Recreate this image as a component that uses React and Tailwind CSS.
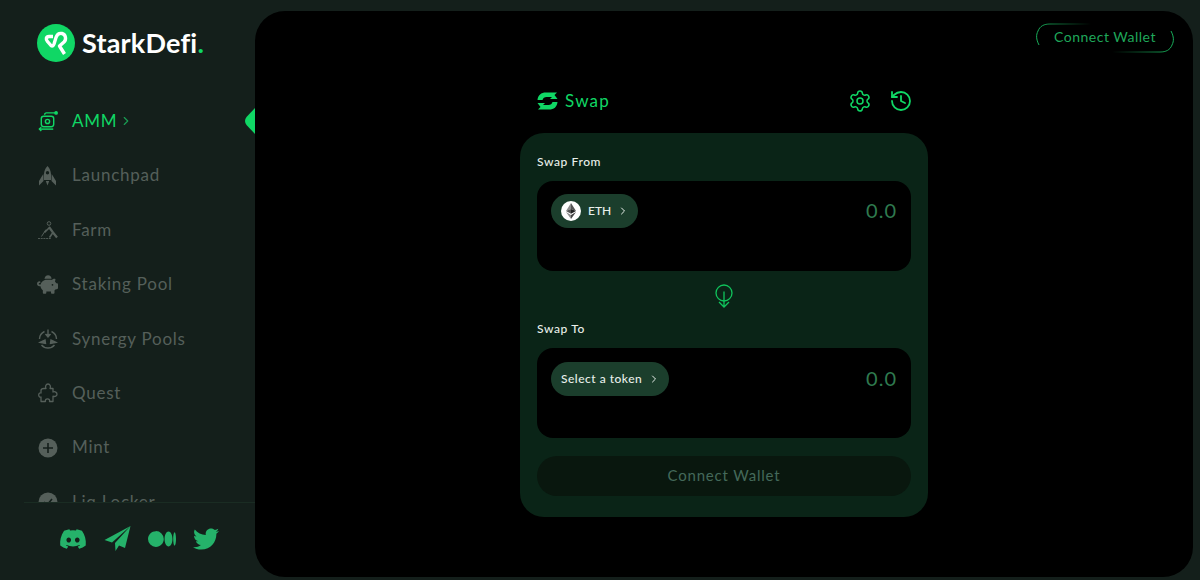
import React from "react";
import { ChevronRight, Settings, History } from "lucide-react";
import { FaDiscord, FaTwitter, FaPiggyBank } from "react-icons/fa6";
import { BsMedium } from "react-icons/bs";

const Logo = () => (
  <svg width="38" height="38" viewBox="0 0 38 38">
    <circle cx="19" cy="19" r="19" fill="#10d765" />
    <path
      d="M16 12.5 H12 C9 12.5 8.5 15.5 10.5 17.5 L14 21.5 C15.5 22.5 16.5 21.5 17 20 L19 13.5 C20 10.5 22.5 9 25 9.5 C29 10.5 29.5 15.5 27 18 L22.5 22 L27.5 30"
      fill="none"
      stroke="#fff"
      strokeWidth="3.4"
      strokeLinejoin="round"
    />
  </svg>
);

const AmmIcon = () => (
  <svg width="22" height="22" viewBox="0 0 22 22" fill="none" stroke="currentColor" strokeWidth="1.5">
    <rect x="4.5" y="6" width="13" height="11" rx="2.5" />
    <circle cx="11" cy="11.5" r="2.2" />
    <path d="M8 4.5 C8 3 9 2.5 10 2.5 H19" />
    <path d="M17 19.5 H2.5" />
    <path d="M4.5 17.5 L2.5 19.5 L4.5 21.5" />
    <circle cx="20" cy="2.5" r="1.2" fill="currentColor" />
  </svg>
);

const RocketIcon = () => (
  <svg width="17" height="20" viewBox="0 0 17 20" fill="currentColor">
    <path
      fillRule="evenodd"
      d="M8.5 0 C11.5 3 12.5 7 12 14 H5 C4.5 7 5.5 3 8.5 0 Z M8.5 5 A1.7 1.7 0 1 0 8.5 8.4 A1.7 1.7 0 1 0 8.5 5 Z"
    />
    <path d="M4.3 8 L0 15 V19.5 L4.5 15 Z" />
    <path d="M12.7 8 L17 15 V19.5 L12.5 15 Z" />
    <path d="M6.8 15 H10.2 L8.5 19.5 Z" />
  </svg>
);

const FarmIcon = () => (
  <svg width="20" height="18" viewBox="0 0 20 18" fill="none" stroke="currentColor">
    <circle cx="11" cy="2.5" r="1.8" />
    <path d="M11 6 L15 11.5 L19 16.5" strokeWidth="2.2" />
    <path d="M11 7 L6.5 11.5" strokeWidth="1.6" />
    <path d="M15 11.5 L11.5 16.5" strokeWidth="1.6" />
    <path d="M8 8.5 L3.5 15.5" strokeWidth="1" />
    <path d="M0 17.5 H13" strokeWidth="0.9" strokeDasharray="2 0.7" />
  </svg>
);

const PuzzleIcon = () => (
  <svg width="20" height="20" viewBox="0 0 20 20" fill="none" stroke="currentColor" strokeWidth="1.3" strokeLinejoin="round">
    <path d="M6 5.5 H8 C6.8 3.5 8 1 10 1 C12 1 13.2 3.5 12 5.5 H15 V9 C17 8.2 19 9.3 19 11.2 C19 13 17 14 15 13.2 V18.5 H11.5 C12 16.8 11 15.8 9.5 15.8 C8 15.8 7 16.8 7.5 18.5 H3 V14 C1.8 14.4 0.7 13.5 0.7 12 C0.7 10.5 1.8 9.6 3 10 V7.5 C3 6.3 4.5 5.5 6 5.5 Z" />
  </svg>
);

const SynergyIcon = () => (
  <svg width="20" height="20" viewBox="0 0 20 20" fill="none" stroke="currentColor" strokeWidth="1.4">
    <path d="M6.5 2.5 A8.5 8.5 0 0 0 1.5 10" />
    <path d="M13.5 2.5 A8.5 8.5 0 0 1 18.5 10" />
    <path d="M3.5 16 A8.5 8.5 0 0 0 16.5 16" />
    <path d="M10 0.5 V7" />
    <path d="M7.5 5 L10 8 L12.5 5" fill="currentColor" />
    <path d="M2 13.5 L7 11 L7.5 14.5 Z" fill="currentColor" />
    <path d="M18 13.5 L13 11 L12.5 14.5 Z" fill="currentColor" />
  </svg>
);

const PlusCircle = () => (
  <svg width="20" height="20" viewBox="0 0 20 20">
    <circle cx="10" cy="10" r="9.5" fill="currentColor" />
    <path d="M10 5 V15 M5 10 H15" stroke="#141f1b" strokeWidth="1.6" />
  </svg>
);

const CheckCircle = () => (
  <svg width="20" height="20" viewBox="0 0 20 20">
    <circle cx="10" cy="10" r="9.5" fill="currentColor" />
    <path d="M6 10 L9 13 L14 7" stroke="#141f1b" strokeWidth="1.6" fill="none" />
  </svg>
);

const Plane = () => (
  <svg width="27" height="27" viewBox="0 0 27 27" fill="currentColor">
    <path d="M26.5 1 L0.5 15 L8 17.5 Z" />
    <path d="M26.5 1 L11 18 L11.5 26 L15 20.5 L21 23 Z" />
  </svg>
);

const SwapIcon = () => (
  <svg width="21" height="18" viewBox="0 0 21 18" fill="currentColor">
    <path d="M0.5 8 C1 3 4 0.5 9 0.5 H20 L17.5 3 L20.5 7 H13 L15 5 H9.5 C7.5 5 6 6 5.5 8 Z" />
    <path d="M20.5 10 C20 15 17 17.5 12 17.5 H1 L3.5 15 L0.5 11 H8 L6 13 H11.5 C13.5 13 15 12 15.5 10 Z" />
  </svg>
);

const EthBadge = () => (
  <div className="w-5 h-5 rounded-full bg-white flex items-center justify-center">
    <svg width="10" height="16" viewBox="0 0 10 16">
      <path d="M5 0 L0 8 L5 6 Z" fill="#8c8c8c" />
      <path d="M5 0 L10 8 L5 6 Z" fill="#555" />
      <path d="M5 6 L0 8 L5 10.8 Z" fill="#555" />
      <path d="M5 6 L10 8 L5 10.8 Z" fill="#222" />
      <path d="M0 9 L5 16 V12 Z" fill="#8c8c8c" />
      <path d="M10 9 L5 16 V12 Z" fill="#444" />
    </svg>
  </div>
);

const ArrowCircle = () => (
  <svg width="18" height="24" viewBox="0 0 18 24" fill="none" stroke="#10c45c" strokeWidth="1.3">
    <circle cx="9" cy="9" r="8" />
    <path d="M9 7.5 V23 M4 18 L9 23 L14 18" />
  </svg>
);

const navItems = [
  { label: "AMM", icon: <AmmIcon />, active: true },
  { label: "Launchpad", icon: <RocketIcon /> },
  { label: "Farm", icon: <FarmIcon /> },
  { label: "Staking Pool", icon: <FaPiggyBank size={21} /> },
  { label: "Synergy Pools", icon: <SynergyIcon /> },
  { label: "Quest", icon: <PuzzleIcon /> },
  { label: "Mint", icon: <PlusCircle /> },
  { label: "Liq Locker", icon: <CheckCircle /> },
];

const TokenBox = ({ top, children }) => (
  <div className={"h-[90px] bg-black rounded-2xl px-3.5 flex justify-between items-start " + top}>
    <div className="h-[34px] rounded-full bg-[#1b3e2c] flex items-center gap-1.5 pl-2.5 pr-[9px] text-[12px] font-medium tracking-[0.5px] text-[#e8efea]">
      {children}
      <ChevronRight size={12} />
    </div>
    <span className="text-[20px] tracking-[1px] leading-[32px] text-[#2f7a4f]">0.0</span>
  </div>
);

const WalletButton = () => (
  <div className="relative w-[138px] h-[30px] pb-[3px] flex items-center justify-center text-[14px] tracking-[0.5px] text-[#1fa75a]">
    <svg width="138" height="30" viewBox="0 0 138 30" fill="none" className="absolute inset-0">
      <defs>
        <linearGradient id="tl" x1="0" y1="0" x2="55" y2="0" gradientUnits="userSpaceOnUse">
          <stop offset="0" stopColor="#18b25c" />
          <stop offset="1" stopColor="#18b25c" stopOpacity="0" />
        </linearGradient>
        <linearGradient id="br" x1="138" y1="0" x2="76" y2="0" gradientUnits="userSpaceOnUse">
          <stop offset="0" stopColor="#18b25c" />
          <stop offset="1" stopColor="#18b25c" stopOpacity="0" />
        </linearGradient>
      </defs>
      <path d="M3 22 C0 16 0 12 2 8 C4 3 8 1 14 1 H56" stroke="url(#tl)" />
      <path d="M135 8 C138 14 138 18 136 22 C134 27 130 29 124 29 H76" stroke="url(#br)" />
    </svg>
    Connect Wallet
  </div>
);

export default function App() {
  return (
    <div
      className="w-[1200px] h-[580px] overflow-hidden flex bg-[#141f1b]"
      style={{ fontFamily: '"Lato", "Noto Sans", sans-serif' }}
    >
      <aside className="w-[255px] shrink-0 flex flex-col">
        <div className="h-[94px] pt-6 pl-[37px] flex items-start gap-[7px]">
          <Logo />
          <span className="text-[27px] leading-[38px] font-bold tracking-[0.2px] text-white">
            StarkDefi<span className="text-[#10d765]">.</span>
          </span>
        </div>
        <nav className="flex-1 min-h-0 overflow-hidden">
          {navItems.map((item) => (
            <div
              key={item.label}
              className={
                "h-[54.4px] flex items-center pl-[37px] text-[17px] tracking-[0.75px] " +
                (item.active ? "text-[#10d765]" : "text-[#555f5a]")
              }
            >
              <span className="w-[21px] flex justify-center">{item.icon}</span>
              <span className="ml-3.5 pb-px">{item.label}</span>
              {item.active && <ChevronRight size={14} className="ml-[2px] text-[#1a9c52]" />}
            </div>
          ))}
        </nav>
        <div className="h-[78px] shrink-0 ml-6 border-t border-[#1a2c23] flex items-center gap-[17px] pl-[35px] pb-1.5 text-[#25b26a]">
          <FaDiscord size={28} />
          <Plane />
          <BsMedium size={28} />
          <FaTwitter size={26} />
        </div>
      </aside>

      <main className="relative flex-1 mt-[11px] mb-[3px] mr-[7px] bg-black rounded-[30px] flex flex-col items-center">
        <svg width="10" height="26" viewBox="0 0 10 26" className="absolute left-[-10px] top-[97px]">
          <path d="M10 0 L1.5 9 C-0.5 11.5 -0.5 14.5 1.5 17 L10 26 Z" fill="#10d765" />
        </svg>
        <div className="w-full flex justify-end pt-3 pr-[19px]">
          <WalletButton />
        </div>

        <div className="w-[408px] mt-[33px] flex items-center justify-between pl-[17px] pr-[15px] h-[30px] text-[#10d765]">
          <div className="flex items-center gap-[7px]">
            <SwapIcon />
            <span className="text-[17px] tracking-[1.2px]">Swap</span>
          </div>
          <div className="flex items-center gap-[17px]">
            <Settings size={24} strokeWidth={1.5} />
            <History size={24} strokeWidth={1.8} />
          </div>
        </div>

        <div className="w-[408px] h-[384px] mt-[17px] bg-[#0a2417] rounded-3xl px-[17px] pt-[21px]">
          <div className="text-[12px] leading-[16px] font-medium tracking-[0.6px] text-[#e8efea]">Swap From</div>
          <div className="mt-[11px]">
            <TokenBox top="pt-[13px]">
              <EthBadge />
              <span className="tracking-normal ml-px">ETH</span>
            </TokenBox>
          </div>
          <div className="h-[40px] flex items-center justify-center mt-[5px]">
            <ArrowCircle />
          </div>
          <div className="text-[12px] leading-[16px] font-medium tracking-[0.6px] text-[#e8efea] mt-[5px]">Swap To</div>
          <div className="mt-[11px]">
            <TokenBox top="pt-[14px]">
              <span>Select a token</span>
            </TokenBox>
          </div>
          <div className="mt-[18px] h-[40px] pb-0.5 rounded-full bg-[#09170e] flex items-center justify-center text-[15px] tracking-[0.8px] text-[#44695a]">
            Connect Wallet
          </div>
        </div>
      </main>
    </div>
  );
}
